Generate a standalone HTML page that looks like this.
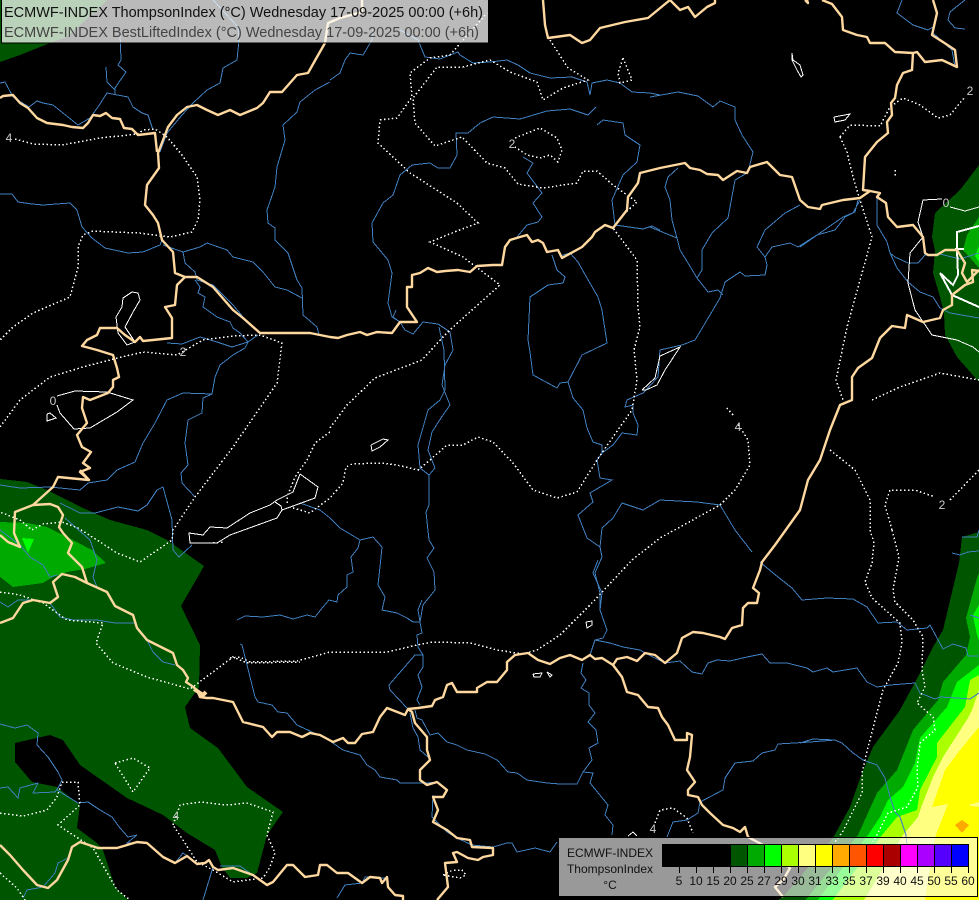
<!DOCTYPE html>
<html><head><meta charset="utf-8"><title>ECMWF-INDEX ThompsonIndex</title>
<style>
html,body{margin:0;padding:0;background:#000;width:979px;height:900px;overflow:hidden}
svg{display:block;font-family:"Liberation Sans",sans-serif}
.f polygon{shape-rendering:crispEdges}
.b polyline{fill:none;stroke:#4080c0;stroke-width:1;shape-rendering:crispEdges}
.d polyline{fill:none;stroke:#fff;stroke-width:1.5;stroke-dasharray:1.5 2.5;shape-rendering:crispEdges}
.w polyline{fill:none;stroke:#fff;stroke-width:1;shape-rendering:crispEdges}
.t polyline{fill:none;stroke:#ffd8a0;stroke-width:2.4;stroke-linejoin:round}
.l text{fill:#ccc;font-size:12px;text-anchor:middle}
.c rect{stroke:#000;stroke-width:1;shape-rendering:crispEdges}
.k path{stroke:#000;fill:none;shape-rendering:crispEdges}
.n text{font-size:12px;text-anchor:middle;fill:#111}
</style></head><body>
<svg width="979" height="900" viewBox="0 0 979 900" xmlns="http://www.w3.org/2000/svg">
<rect width="979" height="900" fill="#000"/>
<g class="f">
<polygon fill="#005500" points="0,0 107,0 100,7 67,37 50,43 20,55 0,62"/>
<polygon fill="#005500" points="0,479 27,482 47,490 83,508 110,520 147,530 167,540 204,566 181,606 200,645 199,687 185,707 190,728 218,748 247,787 283,812 267,835 257,873 247,878 230,878 222,867 215,850 187,833 163,815 127,798 80,765 63,740 50,735 15,743 15,762 32,782 57,787 80,805 77,828 97,843 103,850 115,887 128,900 0,900"/>
<polygon fill="#00aa00" points="0,522 27,523 47,527 67,537 92,550 106,563 85,569 67,572 53,577 43,583 13,587 0,577"/>
<polygon fill="#00ff00" points="22,538 34,539 28,553"/>
<polygon fill="#005500" points="979,165 960,190 935,213 932,237 935,250 933,273 940,297 944,313 945,335 957,357 979,382"/>
<polygon fill="#00aa00" points="979,217 967,235 963,250 979,268"/>
<polygon fill="#00ff00" points="979,246 975,256 979,262"/>
<polygon fill="#005500" points="979,532 962,537 959,563 943,630 933,647 920,673 900,710 873,747 862,773 850,807 833,838 783,897 778,900 979,900"/>
<polygon fill="#00aa00" points="979,573 977,578 966,618 970,637 966,655 943,682 938,700 913,730 897,770 877,793 858,835 808,897 805,900 979,900"/>
<polygon fill="#00ff00" points="979,605 973,615 977,635 979,640"/>
<polygon fill="#00ff00" points="979,665 957,682 947,707 920,738 915,763 903,787 888,800 880,817 868,835 820,897 818,900 979,900"/>
<polygon fill="#aaff00" points="979,675 970,680 965,707 937,743 937,757 920,790 917,810 897,817 882,835 835,897 832,900 979,900"/>
<polygon fill="#ffff80" points="979,690 972,710 968,718 943,757 933,777 922,805 918,817 903,835 866,897 864,900 979,900"/>
<polygon fill="#ffff00" points="979,727 960,750 945,770 932,807 948,804 937,832 935,838 925,900 979,900"/>
<polygon fill="#ffff80" points="968,805 979,802 979,807 972,806"/>
<polygon fill="#ffaa00" points="955,825 962,820 969,825 962,833"/>
</g>
<g class="b">
<polyline points="120,33 121,60 118,65 126,72 115,88 115,95"/>
<polyline points="106,67 107,82 115,90"/>
<polyline points="0,83 5,82 13,97 29,107 37,101 43,103 53,105 78,125 90,118 98,107 107,93 128,97 133,107 142,113 148,115 153,130"/>
<polyline points="160,152 167,133 182,115 193,103 207,90 220,83 223,68 237,60 239,40 238,27 213,0"/>
<polyline points="330,82 315,90 300,102 297,112 283,125 285,140 277,167 275,187 267,210 268,223 275,228 275,240 288,253 297,280 302,288 303,315 317,327 319,335"/>
<polyline points="0,194 12,194 18,202 32,204 43,205 70,203 77,210 82,227 92,238 105,248 128,253 143,252 160,245 162,240"/>
<polyline points="163,245 183,252 200,247 207,243 227,250 233,257 253,262 263,272 275,287 287,290 302,298"/>
<polyline points="183,252 185,263 195,272 197,280 213,285 233,305 243,317 257,330"/>
<polyline points="195,280 200,287 198,293 205,297 203,307 217,317 230,322 233,328 240,333 248,342 245,348 233,355 220,365 215,377 212,394 183,393 167,400 155,423 143,443 135,462 117,470 107,480 88,483 80,490 50,487 20,488 0,485"/>
<polyline points="167,343 182,344 200,337 217,342 232,347 248,342 258,335"/>
<polyline points="212,394 203,398 202,413 188,420 185,443 188,465 181,473 182,483 195,497"/>
<polyline points="60,503 80,513 95,513 118,507 138,511 147,505 157,490 163,487 172,520 173,550 179,557 192,545"/>
<polyline points="65,518 90,540 97,560 93,577 97,587"/>
<polyline points="0,530 20,545 30,557 43,565 50,577 57,575"/>
<polyline points="0,602 8,607 18,600 33,600 50,603 60,617 73,620 97,620 115,623 135,623"/>
<polyline points="147,640 153,652 163,662 175,665"/>
<polyline points="0,724 15,728 27,725 38,733 37,745 48,757 58,772 62,780 57,790 78,803 88,802 100,810 112,817 120,828 128,837 137,835 127,843 147,843"/>
<polyline points="0,788 8,787 18,798 20,788 38,783 33,793 55,792 60,785"/>
<polyline points="23,898 27,890 43,887 55,873 58,863 68,858"/>
<polyline points="213,867 203,900"/>
<polyline points="175,863 183,853 190,858"/>
<polyline points="220,866 240,866 250,873"/>
<polyline points="237,620 245,616 263,617 280,615 293,619 307,615 315,617 323,607 329,600 337,602 338,595 347,587 347,575 353,572 351,557 358,548 360,540 340,528 330,518 320,510 300,503"/>
<polyline points="360,540 373,537 382,547 380,567 378,585 385,597 382,610 397,613 407,618 413,622 420,622"/>
<polyline points="422,600 418,610 420,622 422,633 417,635 418,647 423,655 415,655 402,670 389,685 390,690 407,708"/>
<polyline points="423,655 423,667 418,675 422,687 417,700 420,705"/>
<polyline points="415,710 417,718 422,720 430,735 438,733 447,742 457,745 467,750 485,754 497,760 508,772 517,773 527,780 547,783 560,784 577,784 583,772 593,773 590,783 608,805 605,815 613,825 612,835"/>
<polyline points="410,713 413,728 418,737 420,750 428,757"/>
<polyline points="240,644 242,645 247,665 255,697 258,702 272,705 278,712 287,713 297,725 312,732 325,738 333,743 343,750 360,755 367,765 375,770 380,777 397,780 400,783 427,783 437,782"/>
<polyline points="433,795 432,817 447,832 457,838 472,845 493,847 507,843 512,843 517,852 535,848 550,852 557,842"/>
<polyline points="337,898 345,885 362,883 365,877 385,878"/>
<polyline points="598,560 593,573 602,593 600,610 607,630 603,638 595,640 590,655"/>
<polyline points="583,663 581,673 586,680 581,688 589,693 589,705 595,713 588,722 596,730 598,743 589,748 592,760 583,772"/>
<polyline points="595,640 610,643 623,647 640,650 645,653 665,663 680,661 692,672 702,674 708,663 717,660 730,661 747,657 762,654 770,663 787,663 807,668 813,672 827,668 833,672 857,668 867,682 877,687 890,685 915,683 920,693 935,699 940,697 957,698 970,699 979,693"/>
<polyline points="760,562 773,573 792,588 802,600 827,598 853,599 867,607 878,623 897,622 907,630 927,628 930,625 943,649 953,644 966,648 968,656 979,656"/>
<polyline points="952,553 960,555 968,552 979,551"/>
<polyline points="962,537 977,537 979,530"/>
<polyline points="970,615 979,618"/>
<polyline points="800,743 813,739 835,740 842,743 853,753 863,760 877,765 885,778 890,797 895,812 900,817 906,835 907,845"/>
<polyline points="700,802 698,813 687,820 673,822 667,837"/>
<polyline points="700,802 723,790 725,778 735,763 753,761 762,753 775,750 778,744 810,742 835,740"/>
<polyline points="396,310 393,317 400,322 405,330 413,334 423,322 438,324 450,332 453,350 445,365 442,385 450,405 441,418 432,432 428,450 435,468 429,475 420,468 418,445 428,410 440,400 445,390 444,350 439,327"/>
<polyline points="429,475 429,505 426,512 429,540 434,548 427,558 434,572 435,590 423,605 420,622"/>
<polyline points="372,223 373,242 388,260 392,273 388,303 392,317 400,322"/>
<polyline points="372,223 383,203 393,195 400,175 412,165 430,163 438,168 450,168 457,155 456,133 468,133 480,123 493,117 520,119 547,111 570,109 588,115 596,107"/>
<polyline points="597,125 603,120 623,123 625,135 640,145 637,162 623,175 612,200 615,225 643,229 652,226 660,230"/>
<polyline points="523,157 533,163 527,173 542,193 533,203 542,217 538,222 527,225 517,237"/>
<polyline points="552,255 557,270 565,277 563,283 548,285 530,297 528,340 530,352 533,375 557,388 560,383 568,382 582,355 607,343 602,310 598,297 587,278 578,262 570,253 560,256"/>
<polyline points="568,382 573,398 583,410 587,428 593,442 602,445 602,453 597,460 600,478 612,480 590,493 593,502 578,515 587,538 600,547 602,557 595,573 600,593 600,610"/>
<polyline points="600,547 602,528 613,518 622,503 643,510 660,500 697,502 720,505 735,530 752,552"/>
<polyline points="602,453 613,445 622,433 637,435 638,425 633,413 633,405 625,407 627,400 643,393 658,377 660,350 682,345 695,340 707,320 720,298"/>
<polyline points="720,298 725,282 740,272 745,276 765,275 767,265 765,257 757,247 765,230 785,213 800,205"/>
<polyline points="765,257 772,247 790,243 798,247 817,235 835,230 845,217 853,213 860,200"/>
<polyline points="697,278 708,292 718,290 723,295"/>
<polyline points="697,278 702,270 702,250 712,233 728,218 735,180 747,173"/>
<polyline points="697,278 688,263 680,250 677,238 650,227"/>
<polyline points="677,238 672,220 670,200 665,187 668,177 678,168"/>
<polyline points="650,97 678,92 698,96 713,107 720,101 735,107 735,120 742,135 753,152 748,172"/>
<polyline points="877,197 877,225 887,242 890,253 895,257 908,263 918,263 925,255 940,254 960,259 979,253"/>
<polyline points="890,253 897,268 908,282 920,292 933,297 940,308 950,313 979,318"/>
<polyline points="800,247 820,233 843,217 855,212 858,200"/>
<polyline points="902,0 897,13 913,25 928,30 933,27"/>
<polyline points="965,0 950,12 948,20 955,28 965,29"/>
<polyline points="933,33 952,50 955,67"/>
<polyline points="330,80 340,73 345,60 350,53 363,55 372,40 373,30"/>
<polyline points="400,30 418,40 425,57 440,59 450,55 458,52 460,55 473,63 490,62 507,60 518,65 530,73 550,78 572,77 587,82 590,95 592,83 607,80 620,83 632,92 650,93 660,95"/>
</g>
<g class="d">
<polyline points="15,139 33,144 62,145 100,138 138,134 143,130 155,129 167,137 182,155 197,177 200,200 198,220 192,232 170,237 140,233 113,232 93,231 83,235 78,247 78,267 70,297 33,313 13,327 0,340"/>
<polyline points="0,427 20,400 50,377 83,367 122,357 143,352 177,355 203,340 233,336 260,335 282,343 277,383 233,447 195,497 173,530 172,540 140,562 117,553 97,540 78,528 62,522 43,524 32,530 20,520 0,512"/>
<polyline points="0,592 20,595 43,603 67,620 103,623 96,643 113,663 147,677 190,689 233,657 247,663 300,662"/>
<polyline points="115,763 133,758 150,768 133,792 115,763"/>
<polyline points="173,825 180,805 200,802 227,805 247,803 273,812 267,835 275,853 270,867 263,878 233,882 213,870 197,862 183,840 173,825"/>
<polyline points="0,813 23,816 47,810 57,797 62,782 78,782 80,805 58,825 93,848 117,890 130,900"/>
<polyline points="0,873 17,888 25,900"/>
<polyline points="230,658 240,657 250,662 297,661 330,652 387,652 417,645 433,642 470,643 497,650 523,654 537,650 560,635 590,605 632,560 660,538 720,505 735,490 750,465 748,440 738,424"/>
<polyline points="733,415 727,408"/>
<polyline points="870,530 874,543 872,563 865,582 872,598 900,623 902,643 898,663 883,690 868,747 862,773 862,793 842,833 835,842"/>
<polyline points="892,530 899,557 893,590 895,602 913,620 923,637 922,670 925,687 917,703 933,717 935,730 920,743 917,770 918,787 907,807 888,813 878,833 873,842"/>
<polyline points="830,450 855,470 870,500 870,530"/>
<polyline points="892,530 885,505 890,490 915,490 935,497"/>
<polyline points="950,500 979,470"/>
<polyline points="840,137 847,152 853,177 860,200 872,237 847,327 836,380 843,400"/>
<polyline points="840,137 850,125 880,126 890,107 903,98 920,105 938,118 950,115 965,97"/>
<polyline points="872,400 900,387 940,373 979,380"/>
<polyline points="895,170 895,176"/>
<polyline points="623,58 632,80 620,83 618,73 623,58"/>
<polyline points="550,40 568,68 588,80 563,88 543,100 537,82 510,72 490,60 463,67 437,67 413,98 415,123 435,146 462,137 487,163 505,168 518,184 543,188 577,183 583,171 597,171 613,185 637,202 623,215 613,228 637,260 638,307 640,327 634,350 637,380 632,410 613,437 597,460 577,492 557,498 533,490 513,463 493,442 478,437 463,445 447,445 430,460 418,470 397,465 380,463 352,464 346,467 343,483 330,498 310,513 290,507"/>
<polyline points="330,428 347,405 375,378 422,360 442,338 453,327 500,285 463,257 430,242 452,233 478,223 457,203 410,173 378,143 380,120 397,118 412,97 410,73 430,58 450,55 487,13"/>
<polyline points="330,432 315,443 307,460 295,477 287,497 287,505"/>
<polyline points="213,543 223,542"/>
<polyline points="515,138 540,128 557,138 562,150 558,162 550,155 540,158 527,155 515,147"/>
<polyline points="655,823 660,810 673,808 687,818 693,833"/>
<polyline points="443,875 453,870 462,870 466,875 460,878 443,875"/>
</g>
<g class="w">
<polyline points="132,292 138,293 140,300 133,312 125,327 135,342 127,345 118,333 116,317 122,307 123,298 132,292"/>
<polyline points="57,396 75,391 107,392 133,400 117,412 90,428 74,429 60,413 57,405"/>
<polyline points="47,414 50,413 56,418 47,421 47,414"/>
<polyline points="300,474 318,487 315,498 282,510 277,518 230,535 217,543 190,543 189,533 203,535 210,527 227,528 250,513 270,505 277,500 293,492 300,474"/>
<polyline points="275,502 281,506 282,510"/>
<polyline points="371,445 383,439 388,440 380,447 372,451 371,445"/>
<polyline points="642,390 655,378 660,356 680,347 665,370 657,385 646,390 642,390"/>
<polyline points="792,53 793,60 800,65 803,75 801,77 797,70 792,60 792,53"/>
<polyline points="834,117 850,114 845,120 835,122 834,117"/>
<polyline points="533,674 542,673 540,677 534,677 533,674"/>
<polyline points="547,672 552,675 550,677 547,672"/>
<polyline points="586,622 592,621 592,625 587,628 586,622"/>
<polyline points="628,836 633,832 637,836"/>
<polyline points="942,199 923,200 918,222 923,237 910,253 908,283 915,310 932,335 957,340 973,347 979,352"/>
<polyline points="950,207 965,211 979,207"/>
<polyline points="979,226 957,232 957,250 958,275 953,285 940,273 952,295 979,307" style="stroke-width:2"/>
<polyline points="955,249 964,249" style="stroke-width:2"/>
</g>
<g class="t">
<polyline points="0,98 3,96 13,95 20,103 28,108 37,118 47,123 63,125 72,127 83,128 88,123 93,115 100,116 106,113 112,118 120,119 124,128 132,129 138,135 155,133 157,152"/>
<polyline points="362,0 362,12 340,18 328,23 325,43 317,57 308,73 297,75 282,92 270,92 263,103 257,108 240,115 230,110 218,115 207,110 197,105 187,107 177,115 168,127 163,140 158,153 159,168 147,185 145,205 153,215 158,223 162,240 173,252 175,273 185,277 197,277 213,287 233,310 243,318 260,333 293,333 310,333 330,337 338,338 347,335 360,332 367,335 377,332 392,333 400,322 417,322 407,307 407,287 412,287 412,275 420,273 428,268 437,272 445,271 458,270 470,272 477,266 493,265 502,265 505,247 510,240 520,237 527,235 532,242 538,240 543,243 547,252 558,250 562,258 582,247 592,237 595,232 605,225 613,228 627,210 628,197 638,183 640,173 660,168 670,166 685,163 690,168 700,170 707,174 718,175 723,180 737,171 747,173 750,167 767,162 780,175 792,177 800,200 808,207 820,209 822,205 843,200 860,198 870,191 880,193 877,197 886,203 888,217 897,227 913,225 923,237 925,253 928,255 937,255 945,250 957,250 965,263 962,273 967,282 979,270"/>
<polyline points="185,277 177,285 175,305 165,307 172,318 172,338 143,341 140,337 135,342 125,335 117,328 100,328 97,335 87,340 82,346 97,350 113,355 117,368 119,377 113,380 113,387 108,393 90,400 83,397 82,408 87,423 77,435 82,447 91,452 83,463 90,468 80,472 89,480 58,477 53,487 33,505 15,512 14,533 20,547 8,542 0,535"/>
<polyline points="80,470 89,480"/>
<polyline points="33,505 50,504 58,507 63,515 59,527 63,533 72,543 68,553 82,567 87,583"/>
<polyline points="0,623 13,618 23,603 33,600 50,603 58,597 53,582 62,574 75,577 87,583 107,592 115,606 133,615 137,628 147,640 173,653 177,665 183,670 188,678 186,682 192,686 197,690 200,697 207,698 213,698 233,702 243,722 263,727 272,737 277,732 290,732 302,737 310,733 320,735 333,742 343,738 348,743 355,743 362,734 373,732 380,717 387,708 405,715 408,709 418,708 432,706 435,700 443,697 447,685 452,683 457,692 465,692 477,692 477,688 487,682 497,682 507,670 507,662 515,655 528,653 538,660 550,664 560,658 570,655 582,660 590,655 595,659 602,658 613,665 617,659 627,657 637,661 645,653 655,655 665,663 677,653 682,638 693,632 703,633 720,637 725,639 732,628 742,625 743,608 748,603 757,603 759,593 753,588 760,570 762,562 775,545 800,510 808,480 820,460 830,430 840,405 852,400 852,377 858,368 872,358 880,338 892,326 905,328 907,315 923,322 940,318 943,310 952,305 952,295 965,285 973,282 972,270 979,271"/>
<polyline points="194,689 203,695 206,692" style="stroke-width:4"/>
<polyline points="613,665 622,677 627,692 638,695 648,707 658,708 662,717 668,725 675,740 687,740 687,733 692,735 690,757 687,770 695,782 688,790 688,795 698,797 702,805 710,813 723,825 733,828 740,832 745,827 748,837 763,845 790,868 783,880 775,887 783,897"/>
<polyline points="408,709 412,712 415,723 427,737 427,750 430,760 420,770 420,780 427,785 437,782 447,790 443,797 433,797 438,810 433,822 447,830 457,838 470,840 472,847 493,848 493,855 483,857 478,860 468,858 457,852 453,853 457,862 445,863 448,887 437,900"/>
<polyline points="0,845 10,855 23,870 37,885 48,888 57,880 68,860 72,847 80,842 98,848 117,848 137,842 147,843 163,857 175,863 187,856 197,864 205,863 209,860 213,867 218,870 233,868 253,875 267,885 273,882 287,865 293,865 305,877 318,875 320,865 327,865 337,873 348,873 362,883 370,877 380,878 382,883 387,877 388,887 395,895 403,896 403,900"/>
<polyline points="543,0 545,25 548,38 570,35 582,43 590,40 600,28 625,22 648,18 670,0"/>
<polyline points="670,0 680,10 688,7 695,17 707,7 715,3 715,0"/>
<polyline points="805,0 808,3 807,0"/>
<polyline points="822,0 832,4 842,17 843,30 857,35 867,37 870,43 885,43 895,52 913,53 917,52 925,62 942,60 957,67 955,50 943,42 932,35 937,13 933,0"/>
<polyline points="913,53 912,70 903,73 897,85 895,98 891,103 892,115 887,122 888,133 877,142 865,157 863,190 870,191"/>
</g>
<g class="l">
<text x="9" y="142">4</text>
<text x="183" y="356">2</text>
<text x="512" y="148">2</text>
<text x="970" y="95">2</text>
<text x="946" y="207">0</text>
<text x="53" y="405">0</text>
<text x="738" y="431">4</text>
<text x="942" y="509">2</text>
<text x="176" y="820">4</text>
<text x="653" y="833">4</text>
</g>
<rect x="1.5" y="-1" width="487" height="44" fill="#fff" fill-opacity=".73" stroke="#000" stroke-width="1" shape-rendering="crispEdges"/>
<text x="4" y="17" font-size="14.5" fill="#111" textLength="479" lengthAdjust="spacing">ECMWF-INDEX ThompsonIndex (°C) Wednesday 17-09-2025 00:00 (+6h)</text>
<text x="4" y="37" font-size="14.5" fill="#444" textLength="475" lengthAdjust="spacing">ECMWF-INDEX BestLiftedIndex (°C) Wednesday 17-09-2025 00:00 (+6h)</text>
<rect x="558.5" y="837.5" width="419" height="59" fill="#fff" fill-opacity=".6" stroke="#000" stroke-width="1" shape-rendering="crispEdges"/>
<g class="n">
<text x="610" y="857">ECMWF-INDEX</text>
<text x="610" y="873">ThompsonIndex</text>
<text x="610" y="889">°C</text>
</g>
<g class="c">
<rect x="662.5" y="844.5" width="17" height="22" fill="#000"/>
<rect x="679.5" y="844.5" width="17" height="22" fill="#000"/>
<rect x="696.5" y="844.5" width="17" height="22" fill="#000"/>
<rect x="713.5" y="844.5" width="17" height="22" fill="#000"/>
<rect x="730.5" y="844.5" width="17" height="22" fill="#005500"/>
<rect x="747.5" y="844.5" width="17" height="22" fill="#00aa00"/>
<rect x="764.5" y="844.5" width="17" height="22" fill="#00ff00"/>
<rect x="781.5" y="844.5" width="17" height="22" fill="#aaff00"/>
<rect x="798.5" y="844.5" width="17" height="22" fill="#ffff80"/>
<rect x="815.5" y="844.5" width="17" height="22" fill="#ffff00"/>
<rect x="832.5" y="844.5" width="17" height="22" fill="#ffaa00"/>
<rect x="849.5" y="844.5" width="17" height="22" fill="#ff5500"/>
<rect x="866.5" y="844.5" width="17" height="22" fill="#ff0000"/>
<rect x="883.5" y="844.5" width="17" height="22" fill="#aa0000"/>
<rect x="900.5" y="844.5" width="17" height="22" fill="#ff00ff"/>
<rect x="917.5" y="844.5" width="17" height="22" fill="#aa00ff"/>
<rect x="934.5" y="844.5" width="17" height="22" fill="#5500ff"/>
<rect x="951.5" y="844.5" width="17" height="22" fill="#0000ff"/>
</g>
<g class="k"><path d="M679.5 866V873M696.5 866V873M713.5 866V873M730.5 866V873M747.5 866V873M764.5 866V873M781.5 866V873M798.5 866V873M815.5 866V873M832.5 866V873M849.5 866V873M866.5 866V873M883.5 866V873M900.5 866V873M917.5 866V873M934.5 866V873M951.5 866V873M968.5 866V873"/></g>
<g class="n">
<text x="679" y="885">5</text><text x="696" y="885">10</text><text x="713" y="885">15</text><text x="730" y="885">20</text><text x="747" y="885">25</text><text x="764" y="885">27</text><text x="781" y="885">29</text><text x="798" y="885">30</text><text x="815" y="885">31</text><text x="832" y="885">33</text><text x="849" y="885">35</text><text x="866" y="885">37</text><text x="883" y="885">39</text><text x="900" y="885">40</text><text x="917" y="885">45</text><text x="934" y="885">50</text><text x="951" y="885">55</text><text x="968" y="885">60</text>
</g>
</svg>
</body></html>
